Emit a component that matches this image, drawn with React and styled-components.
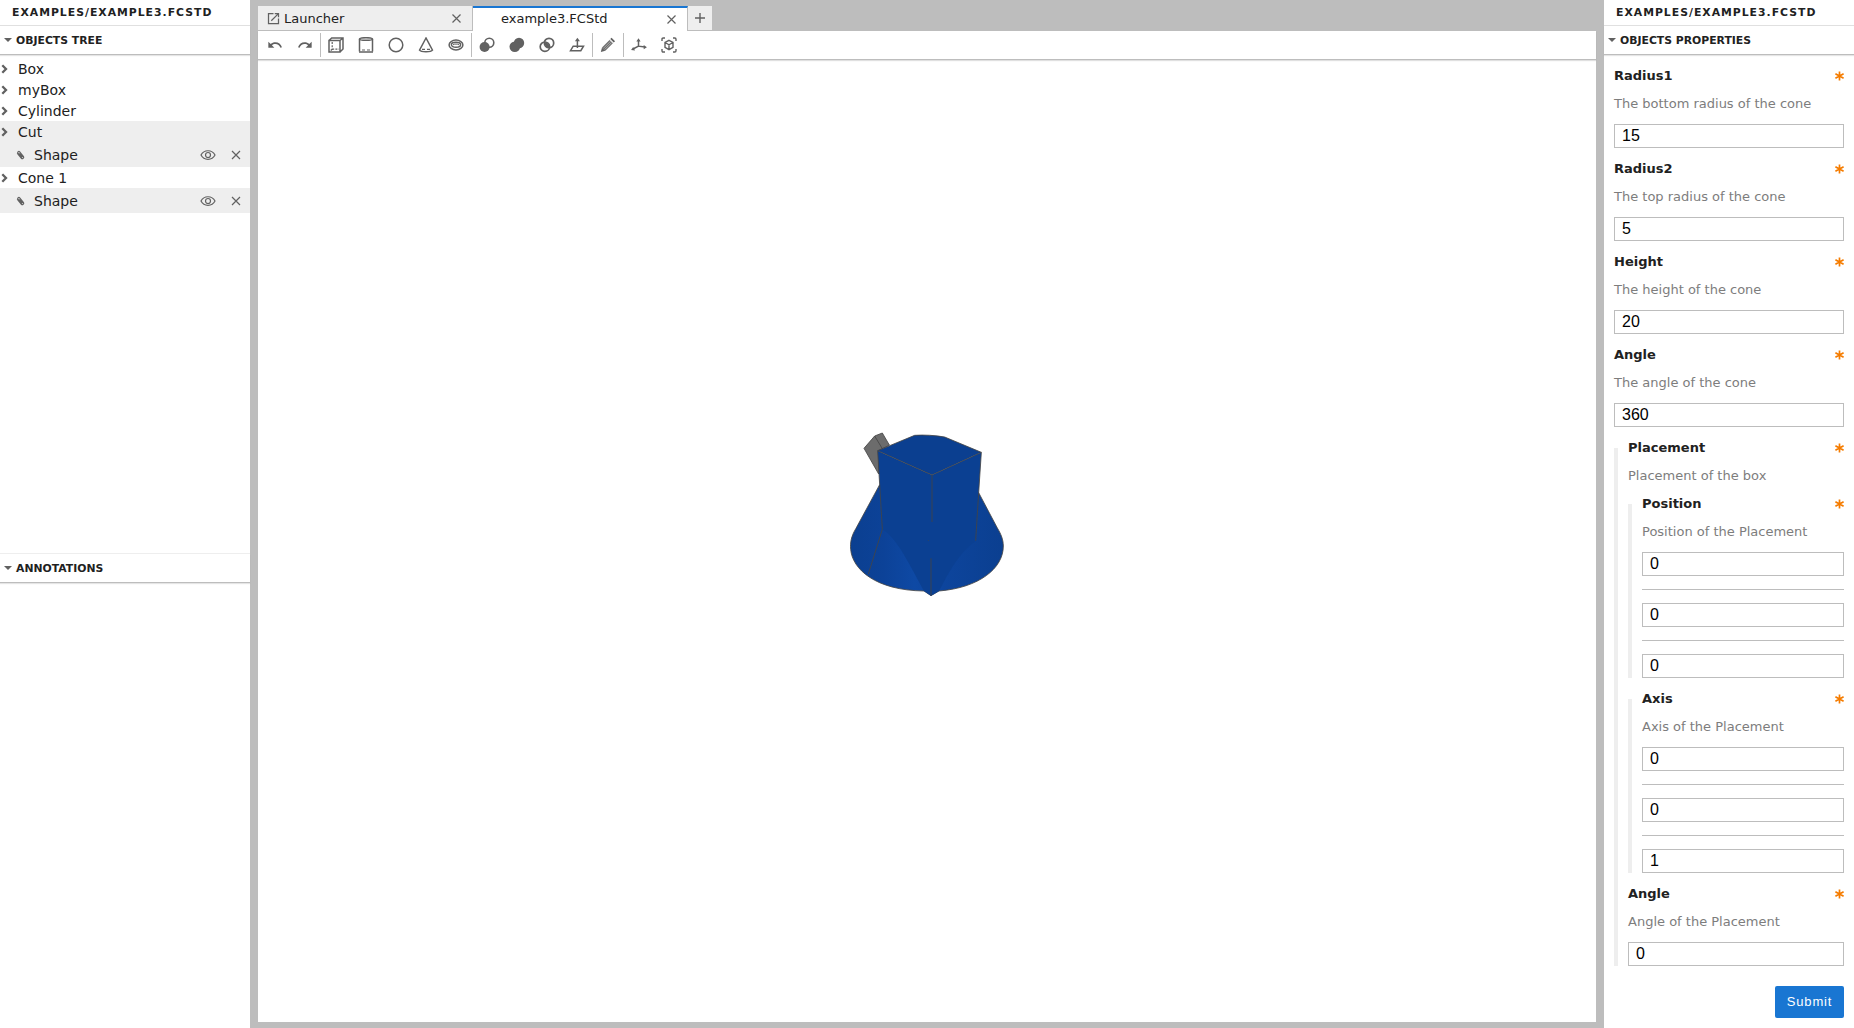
import React from "react";
import styled, { createGlobalStyle, css } from "styled-components";

const c = {
  line: "#bdbdbd",
  soft: "#eeeeee",
  hair: "#e0e0e0",
  text: "#212121",
  muted: "#7d7d7d",
  icon: "#616161",
  brand: "#1976d2",
  warn: "#f57c00",
};

const Global = createGlobalStyle`
  *, *::before, *::after { box-sizing: border-box; }
  html, body { margin: 0; height: 100%; overflow: hidden; }
  body { font-family: "DejaVu Sans", sans-serif; font-size: 13px; color: ${c.text}; background: ${c.line}; }
`;

const Shell = styled.div`
  display: grid;
  grid-template-columns: 250px 1338px 250px;
  column-gap: 8px;
  width: 1854px;
  height: 1028px;
  background: ${c.line};
`;

const Side = styled.aside`
  display: flex;
  flex-direction: column;
  background: #fff;
  min-height: 0;
`;

const SideTitle = styled.h1`
  margin: 0;
  height: 26px;
  padding: 1px 12px 0;
  border-bottom: 1px solid ${c.hair};
  font-size: 10.833px;
  font-weight: 700;
  letter-spacing: 1px;
  line-height: 24px;
  text-transform: uppercase;
  white-space: nowrap;
`;

const SectionHead = styled.h2`
  display: flex;
  align-items: center;
  flex: none;
  gap: 4px;
  margin: 0;
  height: 29px;
  padding: 0 4px;
  border-bottom: 1px solid ${c.line};
  box-shadow: 0 1px 1px rgba(0, 0, 0, 0.1);
  font-size: 10.833px;
  font-weight: 700;
  text-transform: uppercase;
  white-space: nowrap;
`;

const Caret = styled.span`
  width: 8px;
  display: flex;
  justify-content: center;
  &::after {
    content: "";
    border: 4px solid transparent;
    border-top-color: ${c.icon};
    border-bottom: 0;
  }
`;

const Tree = styled.ul`
  list-style: none;
  margin: 0;
  padding: 3px 0 0;
  height: 498px;
  font-size: 14px;
`;

const TreeRow = styled.li`
  display: flex;
  align-items: center;
  height: 21px;
  background: ${(p) => (p.$active ? c.soft : "transparent")};
  svg { flex: none; }
`;

const TreeLabel = styled.span`
  margin-left: 10px;
  padding-top: 1px;
  line-height: 22px;
`;

const ChildRow = styled(TreeRow)`
  height: 25px;
  padding: 0 6px 0 16px;
  background: ${c.soft};
`;

const ChildLabel = styled.span`
  flex: 1;
  margin-left: 9px;
`;

const RowActions = styled.span`
  display: flex;
  align-items: center;
  gap: 12px;
`;

const Annotations = styled.section`
  flex: 1;
  border-top: 1px solid ${c.soft};
`;

const Main = styled.main`
  display: flex;
  flex-direction: column;
  padding: 6px 0;
  min-width: 0;
`;

const TabBar = styled.div`
  display: flex;
  height: 25px;
`;

const Tab = styled.div`
  display: flex;
  align-items: center;
  width: 215px;
  padding: 0 11px 0 8px;
  font-size: 13px;
  background: ${c.soft};
  border-right: 1px solid ${c.line};
  border-bottom: 1px solid ${c.line};
  ${(p) =>
    p.$current &&
    css`
      padding: 0 11px 1px 28px;
      background: #fff;
      border-top: 2px solid ${c.brand};
      border-bottom: 0;
      line-height: 20px;
    `}
`;

const TabLabel = styled.span`
  flex: 1;
  margin-left: ${(p) => p.$gap || 0}px;
  white-space: nowrap;
`;

const AddTab = styled.div`
  display: flex;
  align-items: center;
  justify-content: center;
  width: 24px;
  height: 25px;
  background: ${c.soft};
  border-bottom: 1px solid ${c.line};
`;

const Toolbar = styled.div`
  display: flex;
  align-items: center;
  flex: none;
  height: 29px;
  padding-left: 2px;
  background: #fff;
  border-bottom: 1px solid ${c.line};
  box-shadow: 0 1px 1px rgba(0, 0, 0, 0.12);
  z-index: 1;
`;

const Tool = styled.span`
  display: flex;
  align-items: center;
  justify-content: center;
  width: 30px;
  height: 24px;
`;

const Divider = styled.span`
  width: 1px;
  height: 24px;
  background: ${c.line};
`;

const Viewport = styled.div`
  flex: 1;
  display: flex;
  align-items: flex-start;
  justify-content: center;
  padding: 360px 4px 0 0;
  background: #fff;
`;

const Form = styled.form`
  display: flex;
  flex-direction: column;
  padding: 0 10px;
`;

const Label = styled.label`
  display: flex;
  justify-content: space-between;
  align-items: center;
  height: 28px;
  padding-bottom: 1px;
  font-size: 13px;
  font-weight: 700;
`;

const Star = styled.span`
  display: flex;
  width: 9px;
`;

const Hint = styled.p`
  margin: 0;
  height: 28px;
  line-height: 28px;
  color: ${c.muted};
  white-space: nowrap;
`;

const Field = styled.div`
  margin-top: 7px;
`;

const Input = styled.input`
  display: block;
  width: 100%;
  height: 24px;
  margin: ${(p) => (p.$flush ? 0 : "6px 0 0")};
  padding: 0 7px 1px;
  border: 1px solid ${c.line};
  border-radius: 0;
  outline: 0;
  background: #fff;
  color: #000;
  font: 16px "Liberation Sans", Arial, sans-serif;
`;

const Rule = styled.hr`
  margin: 13px 0;
  border: 0;
  height: 1px;
  background: ${c.line};
`;

const Group = styled.div`
  display: flow-root;
  margin-top: ${(p) => (p.$first ? 14 : 21)}px;
  padding-left: 10px;
  border-left: 4px solid ${c.soft};
`;

const GroupLabel = styled(Label)`
  margin-top: -14px;
`;

const Submit = styled.button`
  align-self: flex-end;
  width: 69px;
  height: 32px;
  margin-top: 20px;
  padding: 0 0 2px;
  border: 0;
  border-radius: 2px;
  background: ${c.brand};
  color: #fff;
  font: 13px "Liberation Sans", Arial, sans-serif;
  letter-spacing: 0.8px;
`;

function Icon({ size = 16, w, h, box = "0 0 16 16", sw = 1.4, children }) {
  return (
    <svg width={w || size} height={h || size} viewBox={box} fill="none" stroke={c.icon} strokeWidth={sw}>
      {children}
    </svg>
  );
}

const Solid = ({ d, size = 16, box = "0 0 24 24" }) => (
  <svg width={size} height={size} viewBox={box} fill={c.icon}>
    <path d={d} />
  </svg>
);

const Close = ({ size = 9 }) => (
  <Icon size={size} box="0 0 9 9" sw={1.2}>
    <path d="M.5.5l8 8M8.500.5l-8 8" />
  </Icon>
);

const Eye = () => (
  <Icon w={16} h={12} box="0 0 16 12" sw={1.2}>
    <path d="M1 6C4 .3 12 .3 15 6 12 11.700 4 11.700 1 6z" />
    <circle cx="8" cy="6" r="2.500" />
  </Icon>
);

const Chevron = () => (
  <Icon w={8} h={10} box="0 0 8 10" sw={2.300}>
    <path d="M2.300 1.300L6 5 2.300 8.700" />
  </Icon>
);

const Clip = () => (
  <Icon w={9} h={10} box="0 0 9 10" sw={1.200}>
    <path d="M1.200 3.200L5.400 8.300C6.500 9.300 8.300 7.900 7.500 6.600L3.700 1.900C2.800.9 1.200 2 1.900 3.200L5.500 7.300 6.100 6.700 3.300 3.300" />
  </Icon>
);

const Asterisk = () => (
  <svg width="9" height="10" viewBox="0 0 9 10" stroke={c.warn} strokeWidth="1.700" fill="none">
    <path d="M4.500.5v9M.4 2.700l8.200 4.600M8.600 2.700L.4 7.300" />
  </svg>
);

const undo = "M12.5 8c-2.650 0-5.050.99-6.900 2.600L2 7v9h9l-3.620-3.620c1.390-1.160 3.160-1.880 5.120-1.880 3.540 0 6.550 2.310 7.600 5.500l2.370-.78C21.080 11.030 17.150 8 12.500 8z";
const redo = "M18.400 10.600C16.550 8.990 14.150 8 11.500 8c-4.650 0-8.580 3.030-9.960 7.220L3.900 16c1.050-3.190 4.050-5.500 7.600-5.500 1.950 0 3.730.72 5.120 1.880L13 16h9V7l-3.600 3.600z";
const launch = "M19 19H5V5h7V3H3v18h18v-9h-2v7zM14 3v2h3.590l-9.830 9.830 1.410 1.410L19 6.410V10h2V3h-7z";

const BoxIcon = () => (
  <Icon sw={1.5}>
    <path d="M1 3.500h11v11.500H1zM1 3.500L3.700 1H15v11L12 15M12 3.500L15 1" />
    <path d="M4.200 5v7.200M4.200 12.200H11M4.200 12.200L1.500 14.700" strokeWidth="1.200" strokeDasharray="2 1.200" />
  </Icon>
);
const CylinderIcon = () => (
  <Icon sw={1.5}>
    <path d="M1.500 2v12.500M14.500 2v12.500" strokeWidth="1.500" />
    <ellipse cx="8" cy="2" rx="6.500" ry="1.300" />
    <path d="M1 15h14" />
    <path d="M4 13h3M9 13h3" strokeWidth="1.200" />
  </Icon>
);
const SphereIcon = () => (
  <Icon sw={1.5}><circle cx="8" cy="8" r="6.800" /></Icon>
);
const ConeIcon = () => (
  <Icon sw={1.5}>
    <path d="M8 1L1.500 13.200C3 15.400 13 15.400 14.500 13.200z" />
    <path d="M4 12.300h3M9 12.300h3" strokeWidth="1.200" />
  </Icon>
);
const TorusIcon = () => (
  <Icon sw={1.5}>
    <ellipse cx="8" cy="8" rx="6.900" ry="4.900" />
    <ellipse cx="8" cy="7.800" rx="4.600" ry="2.500" />
    <path d="M5 7.800c1.500-1 4.500-1 6 0" strokeWidth="1" />
  </Icon>
);
const CutIcon = () => (
  <Icon sw={1.6}>
    <circle cx="10.300" cy="5.700" r="4.500" />
    <circle cx="5.600" cy="10" r="5" fill={c.icon} stroke="none" />
  </Icon>
);
const UnionIcon = () => (
  <Icon>
    <g fill={c.icon} stroke="none">
      <circle cx="10" cy="6" r="5.200" />
      <circle cx="5.800" cy="9.800" r="5.300" />
    </g>
  </Icon>
);
const IntersectIcon = () => (
  <Icon sw={1.700}>
    <circle cx="10" cy="6" r="4.700" />
    <circle cx="5.900" cy="9.700" r="4.700" />
    <path d="M5.400 5.300A4.700 4.700 0 0110.600 10.600 4.700 4.700 0 015.400 5.300z" fill={c.icon} stroke="none" />
  </Icon>
);
const ExtrudeIcon = () => (
  <Icon sw={1.500}>
    <path d="M4.200 9.200H14.500L11.800 13.700H1.500z" />
    <path d="M8.400 11V3" />
    <path d="M8.400 .8L10.900 4.300H5.900z" fill={c.icon} stroke="none" />
  </Icon>
);
const PencilIcon = () => (
  <Icon>
    <path d="M.8 15l1.200-4.600 3.400 3.400z" fill={c.icon} stroke="none" />
    <path d="M3.700 12.100L11.200 4.600" stroke="#707070" strokeWidth="4.800" />
    <path d="M4 10.800L10.600 4.200M5.200 12L11.800 5.400" stroke="#b5b5b5" strokeWidth=".8" />
    <path d="M12 3.800L13.300 2.500" strokeWidth="5" />
    <path d="M9.700 2.700L13.100 6.100" stroke="#ddd" strokeWidth=".8" />
  </Icon>
);
const AxesIcon = () => (
  <Icon sw={1.500}>
    <path d="M7.500 3v6.200L14 10M7.500 9.200L2 12" />
    <g fill={c.icon} stroke="none">
      <path d="M7.500 1.200L9.600 4.500H5.400z" />
      <path d="M15.900 10.200L12.700 12.200V8z" />
      <path d="M.1 12.900L2.200 10 4 13.500z" />
    </g>
  </Icon>
);
const ExplodeIcon = () => (
  <Icon sw={1.400}>
    <path d="M1 4V2.200Q1 1 2.200 1H4M12 1h1.800Q15 1 15 2.200V4M15 12v1.800q0 1.200-1.200 1.200H12M4 15H2.200Q1 15 1 13.800V12" />
    <path d="M8 3.300l4 2.200v4.800L8 12.700l-4-2.400V5.500zM4 5.500l4 2.300 4-2.300M8 7.800v4.900" />
  </Icon>
);

const tools = [
  [() => <Solid d={undo} />, () => <Solid d={redo} />],
  [BoxIcon, CylinderIcon, SphereIcon, ConeIcon, TorusIcon],
  [CutIcon, UnionIcon, IntersectIcon, ExtrudeIcon],
  [PencilIcon],
  [AxesIcon, ExplodeIcon],
];

const objects = [
  { name: "Box" },
  { name: "myBox" },
  { name: "Cylinder" },
  { name: "Cut", active: true, open: true },
  { name: "Cone 1", open: true },
];

function Model() {
  return (
    <svg width="190" height="190" viewBox="0 0 570 570" stroke="#444" strokeWidth="2.500" strokeLinejoin="round">
      <defs>
        <linearGradient id="cone" x1="60" x2="520" y1="0" y2="0" gradientUnits="userSpaceOnUse">
          <stop offset="0" stopColor="#0b3f90" />
          <stop offset=".22" stopColor="#0c4298" />
          <stop offset=".42" stopColor="#0e49a4" />
          <stop offset=".6" stopColor="#0d459d" />
          <stop offset="1" stopColor="#0b3f90" />
        </linearGradient>
      </defs>
      <path d="M102 85L134 48 157 39 178 75 146 92V162z" fill="#6c6c6c" />
      <path d="M134 48L157 86" fill="none" />
      <path
        d="M149 194L78 325C64 348 60 367 62 388C67 447 135 511 282 513L303 527 327 513C448 503 520 445 520 378C520 359 513 342 502 324L446 218z"
        fill="url(#cone)"
      />
      <path
        d="M143 92L149 194 157 328C197 352 229 415 282 513L303 527 327 513C354 461 386 398 437 362L446 218 454 97 306 165z"
        fill="#0b4092"
        stroke="none"
      />
      <path d="M143 92L254 46C282 44 315 46 344 51L454 97 306 165z" fill="#0b3f90" />
      <path d="M143 92L149 194 157 328 115 462M454 97L446 218 437 362M306 165V306M303 415V527" fill="none" />
      <path d="M295 360v2" fill="none" />
    </svg>
  );
}

const Heading = ({ as: Tag = Label, children }) => (
  <Tag>
    {children}
    <Star><Asterisk /></Star>
  </Tag>
);

const NumberField = ({ label, hint, value }) => (
  <Field>
    <Heading>{label}</Heading>
    <Hint>{hint}</Hint>
    <Input defaultValue={value} />
  </Field>
);

const VectorGroup = ({ label, hint, values, first }) => (
  <Group $first={first}>
    <Heading as={GroupLabel}>{label}</Heading>
    <Hint>{hint}</Hint>
    {values.map((v, i) => (
      <React.Fragment key={i}>
        {i > 0 && <Rule />}
        <Input $flush={i > 0} defaultValue={v} />
      </React.Fragment>
    ))}
  </Group>
);

export default function App() {
  return (
    <>
      <Global />
      <Shell>
        <Side>
          <SideTitle>examples/example3.FCStd</SideTitle>
          <SectionHead><Caret />Objects tree</SectionHead>
          <Tree>
            {objects.map((o) => (
              <React.Fragment key={o.name}>
                <TreeRow $active={o.active}>
                  <Chevron />
                  <TreeLabel>{o.name}</TreeLabel>
                </TreeRow>
                {o.open && (
                  <ChildRow>
                    <Clip />
                    <ChildLabel>Shape</ChildLabel>
                    <RowActions>
                      <Eye />
                      <Icon size={16} sw={1.2}><path d="M4 4l8 8M12 4l-8 8" /></Icon>
                    </RowActions>
                  </ChildRow>
                )}
              </React.Fragment>
            ))}
          </Tree>
          <Annotations>
            <SectionHead><Caret />Annotations</SectionHead>
          </Annotations>
        </Side>

        <Main>
          <TabBar>
            <Tab>
              <Solid d={launch} size={15} />
              <TabLabel $gap={3}>Launcher</TabLabel>
              <Close />
            </Tab>
            <Tab $current>
              <TabLabel>example3.FCStd</TabLabel>
              <Close />
            </Tab>
            <AddTab>
              <Icon size={10} box="0 0 10 10"><path d="M5 0v10M0 5h10" /></Icon>
            </AddTab>
          </TabBar>
          <Toolbar>
            {tools.map((group, g) => (
              <React.Fragment key={g}>
                {g > 0 && <Divider />}
                {group.map((Glyph, i) => (
                  <Tool key={i}><Glyph /></Tool>
                ))}
              </React.Fragment>
            ))}
          </Toolbar>
          <Viewport><Model /></Viewport>
        </Main>

        <Side>
          <SideTitle>examples/example3.FCStd</SideTitle>
          <SectionHead><Caret />Objects properties</SectionHead>
          <Form>
            <NumberField label="Radius1" hint="The bottom radius of the cone" value="15" />
            <NumberField label="Radius2" hint="The top radius of the cone" value="5" />
            <NumberField label="Height" hint="The height of the cone" value="20" />
            <NumberField label="Angle" hint="The angle of the cone" value="360" />
            <Group>
              <Heading as={GroupLabel}>Placement</Heading>
              <Hint>Placement of the box</Hint>
              <VectorGroup first label="Position" hint="Position of the Placement" values={[0, 0, 0]} />
              <VectorGroup label="Axis" hint="Axis of the Placement" values={[0, 0, 1]} />
              <NumberField label="Angle" hint="Angle of the Placement" value="0" />
            </Group>
            <Submit type="button">Submit</Submit>
          </Form>
        </Side>
      </Shell>
    </>
  );
}
